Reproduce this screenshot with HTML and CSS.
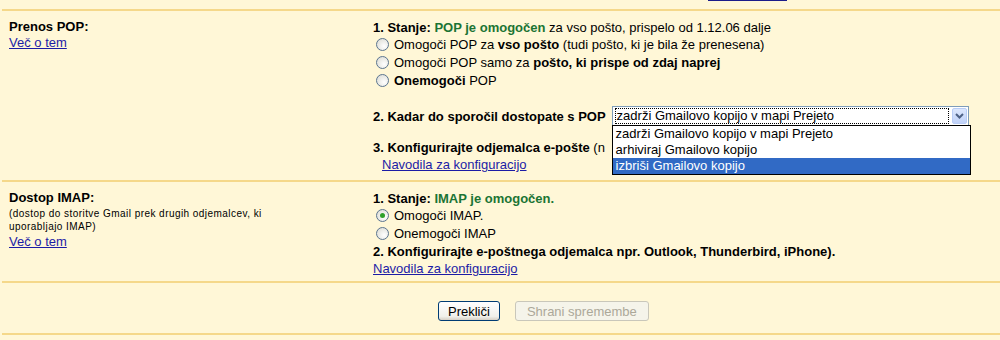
FILE: index.html
```html
<!DOCTYPE html>
<html lang="sl">
<head>
  <meta charset="UTF-8" />
  <title>Posredovanje in POP/IMAP</title>
  <link rel="stylesheet" href="styles.css">
</head>
<body>
  <div class="prev"><span class="prev-link"></span></div>

  <div class="section pop">
    <div class="label">
      <div class="title">Prenos POP:</div>
      <a href="#">Več o tem</a>
    </div>
    <div class="content">
      <div class="line"><b>1. Stanje:</b> <b class="ok">POP je omogočen</b> za vso pošto, prispelo od 1.12.06 dalje</div>
      <label class="radio-row"><span class="radio"></span>Omogoči POP za <b>vso pošto</b> (tudi pošto, ki je bila že prenesena)</label>
      <label class="radio-row"><span class="radio"></span>Omogoči POP samo za <b>pošto, ki prispe od zdaj naprej</b></label>
      <label class="radio-row"><span class="radio"></span><b>Onemogoči</b> POP</label>

      <div class="line select-row">
        <b>2. Kadar do sporočil dostopate s POP</b>
        <div class="select-wrap">
          <div class="select">
            <span class="select-value">zadrži Gmailovo kopijo v mapi Prejeto</span>
            <span class="select-btn">
              <svg width="9" height="6" viewBox="0 0 9 6"><path d="M1 1 L4.5 4.5 L8 1" fill="none" stroke="#4d6185" stroke-width="2"/></svg>
            </span>
          </div>
          <ul class="options">
            <li>zadrži Gmailovo kopijo v mapi Prejeto</li>
            <li>arhiviraj Gmailovo kopijo</li>
            <li class="active">izbriši Gmailovo kopijo</li>
          </ul>
        </div>
      </div>

      <div class="line step3"><b>3. Konfigurirajte odjemalca e-pošte</b> (n</div>
      <div class="line indent"><a href="#">Navodila za konfiguracijo</a></div>
    </div>
  </div>

  <div class="section imap">
    <div class="label">
      <div class="title">Dostop IMAP:</div>
      <div class="note">(dostop do storitve Gmail prek drugih odjemalcev, ki uporabljajo IMAP)</div>
      <a href="#">Več o tem</a>
    </div>
    <div class="content">
      <div class="line"><b>1. Stanje:</b> <b class="ok">IMAP je omogočen.</b></div>
      <label class="radio-row"><span class="radio checked"></span>Omogoči IMAP.</label>
      <label class="radio-row"><span class="radio"></span>Onemogoči IMAP</label>
      <div class="line"><b>2. Konfigurirajte e-poštnega odjemalca npr. Outlook, Thunderbird, iPhone).</b></div>
      <div class="line"><a href="#">Navodila za konfiguracijo</a></div>
    </div>
  </div>

  <div class="section actions">
    <button class="btn">Prekliči</button>
    <button class="btn" disabled>Shrani spremembe</button>
  </div>
</body>
</html>
```

FILE: styles.css
```css
html {
  background: #fff7d7;
}
body {
  margin: 0 0 0 2px;
  font-family: "Liberation Sans", Arial, sans-serif;
  font-size: 13px;
  color: #000;
}
a {
  color: #1c1ca6;
}
.prev {
  height: 9px;
}
.prev-link {
  display: block;
  margin-left: 706px;
  width: 79px;
  height: 1px;
  background: #1c1c8a;
}
.section {
  display: flex;
  border-top: 2px solid #f5d88a;
}
.label {
  width: 364px;
  box-sizing: border-box;
  padding: 8px 0 0 7px;
  line-height: 16px;
}
.title {
  font-weight: bold;
}
.note {
  font-size: 10px;
  letter-spacing: 0.45px;
  line-height: 13px;
  width: 270px;
  margin: 1px 0 1px;
}
.content {
  flex: 1;
  padding: 8px 0 0 7px;
}
.pop {
  height: 169px;
}
.imap {
  height: 99px;
}
.line {
  line-height: 17px;
}
.ok {
  color: #1b7434;
}
.radio-row {
  display: block;
  height: 18px;
  line-height: 18px;
  padding-left: 3px;
}
.radio {
  display: inline-block;
  vertical-align: -2px;
  width: 11px;
  height: 11px;
  border: 1px solid #5b7590;
  border-radius: 50%;
  background: radial-gradient(circle at 65% 65%, #fff 0, #e4e4de 70%, #c9c9c2 100%);
  margin-right: 5px;
  position: relative;
}
.radio.checked::after {
  content: "";
  position: absolute;
  left: 3px;
  top: 3px;
  width: 5px;
  height: 5px;
  border-radius: 50%;
  background: #2ea02a;
}
.select-row {
  display: flex;
  align-items: center;
  margin-top: 15px;
  height: 22px;
}
.select-wrap {
  position: relative;
  margin-left: 6px;
}
.select {
  width: 355px;
  height: 18px;
  border: 1px solid #7f9db9;
  background: #fff;
  display: flex;
  align-items: center;
  justify-content: space-between;
}
.select-value {
  margin-left: 2px;
  padding: 0 1px;
  width: 330px;
  line-height: 14px;
  border: 1px dotted #000;
}
.select-btn {
  width: 15px;
  height: 16px;
  margin-right: 1px;
  border: 1px solid #b9cdf6;
  border-radius: 2px;
  background: linear-gradient(#dce7fd, #c0d2f8);
  display: flex;
  align-items: center;
  justify-content: center;
  box-sizing: border-box;
}
.options {
  position: absolute;
  left: 0;
  top: 19px;
  width: 357px;
  margin: 0;
  padding: 0;
  list-style: none;
  background: #fff;
  border: 1px solid #000;
  z-index: 2;
}
.options li {
  height: 16px;
  line-height: 16px;
  padding-left: 3px;
}
.options li.active {
  background: #316ac5;
  color: #fff;
}
.step3 {
  margin-top: 12px;
  white-space: nowrap;
}
.indent {
  padding-left: 9px;
  line-height: 17px;
}
.imap .radio-row {
  height: 18px;
}
.actions {
  height: 54px;
  padding: 18px 0 0 436px;
  box-sizing: border-box;
  border-bottom: 2px solid #f5d88a;
  gap: 15px;
  align-items: flex-start;
}
.btn {
  font-family: "Liberation Sans", Arial, sans-serif;
  font-size: 13px;
  height: 20px;
  padding: 0 9px;
  border: 1px solid #003c74;
  border-radius: 3px;
  background: linear-gradient(#fff, #f0f0ea 80%, #d6d0c5);
  color: #000;
}
.btn:disabled {
  border-color: #c9c7ba;
  background: #f5f4ea;
  color: #aca899;
  padding: 0 11px;
}
```
